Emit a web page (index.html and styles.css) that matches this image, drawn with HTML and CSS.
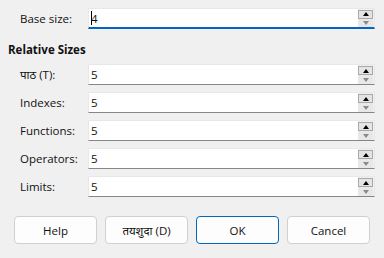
FILE: index.html
```html
<!DOCTYPE html>
<html lang="en">
<head>
    <meta charset="UTF-8">
    <title>Font Size</title>
    <link rel="stylesheet" href="styles.css">
</head>
<body>

    <div class="dialog">
        <!-- Base size -->
        <div class="row">
            <div class="label">Base size:</div>
            <div class="field focused">
                <div class="value"><span class="caret"></span>4</div>
                <div class="spin"><div class="up"></div><div class="down"></div></div>
            </div>
        </div>

        <div class="heading">Relative Sizes</div>

        <div class="row">
            <div class="label">पाठ (T):</div>
            <div class="field">
                <div class="value">5</div>
                <div class="spin"><div class="up"></div><div class="down"></div></div>
            </div>
        </div>
        <div class="row">
            <div class="label">Indexes:</div>
            <div class="field">
                <div class="value">5</div>
                <div class="spin"><div class="up"></div><div class="down"></div></div>
            </div>
        </div>
        <div class="row">
            <div class="label">Functions:</div>
            <div class="field">
                <div class="value">5</div>
                <div class="spin"><div class="up"></div><div class="down"></div></div>
            </div>
        </div>
        <div class="row">
            <div class="label">Operators:</div>
            <div class="field">
                <div class="value">5</div>
                <div class="spin"><div class="up"></div><div class="down"></div></div>
            </div>
        </div>
        <div class="row">
            <div class="label">Limits:</div>
            <div class="field">
                <div class="value">5</div>
                <div class="spin"><div class="up"></div><div class="down"></div></div>
            </div>
        </div>

        <!-- Buttons -->
        <div class="buttons">
            <button class="btn">Help</button>
            <button class="btn">तयशुदा (D)</button>
            <button class="btn default">OK</button>
            <button class="btn">Cancel</button>
        </div>
    </div>

</body>
</html>
```

FILE: styles.css
```css
* {
    margin: 0;
    padding: 0;
    box-sizing: border-box;
}
body {
    background-color: #f0f0f0;
    font-family: "Open Sans", "Noto Sans", "Noto Sans Devanagari", sans-serif;
    font-size: 11.5px;
    color: #111;
}
.dialog {
    padding: 8px 9px 14px 8px;
}
.row {
    display: grid;
    grid-template-columns: 80px 1fr;
    align-items: center;
    margin-bottom: 7px;
}
.label {
    padding-left: 12px;
}
.field {
    display: flex;
    align-items: center;
    height: 21px;
    background-color: #ffffff;
    border: 1px solid #e8e8e8;
    border-bottom: 1px solid #868686;
    padding-left: 2px;
}
.field.focused {
    border-bottom: 2px solid #0067c0;
}
.value {
    flex: 1;
    display: flex;
    align-items: center;
}
.caret {
    display: inline-block;
    width: 1px;
    height: 14px;
    background-color: #000;
    margin-right: -1px;
}
.spin {
    width: 16px;
    display: flex;
    flex-direction: column;
    background-color: #f0f0f0;
    align-self: stretch;
    padding-top: 1px;
}
.up, .down {
    height: 9px;
    width: 15px;
    position: relative;
}
.up {
    background-color: #e4e4e4;
    border: 1px solid #a9a9a9;
}
.down {
    background-color: #e8e8e8;
}
.up::after, .down::after {
    content: "";
    position: absolute;
    left: 50%;
    top: 50%;
    margin-left: -3px;
    margin-top: -2px;
    border-left: 3px solid transparent;
    border-right: 3px solid transparent;
}
.up::after {
    border-bottom: 4px solid #000;
}
.down::after {
    border-top: 4px solid #8a8a8a;
}
.heading {
    font-weight: bold;
    margin: 13px 0 6px 0;
    line-height: 16px;
}
.buttons {
    display: flex;
    gap: 8px;
    padding-left: 6px;
    margin-top: 19px;
}
.btn {
    width: 83px;
    height: 28px;
    font-family: inherit;
    font-size: 11.5px;
    color: #111;
    background-color: #fdfdfd;
    border: 1px solid #d0d0d0;
    border-radius: 4px;
}
.btn.default {
    border: 1px solid #0067c0;
}
```
